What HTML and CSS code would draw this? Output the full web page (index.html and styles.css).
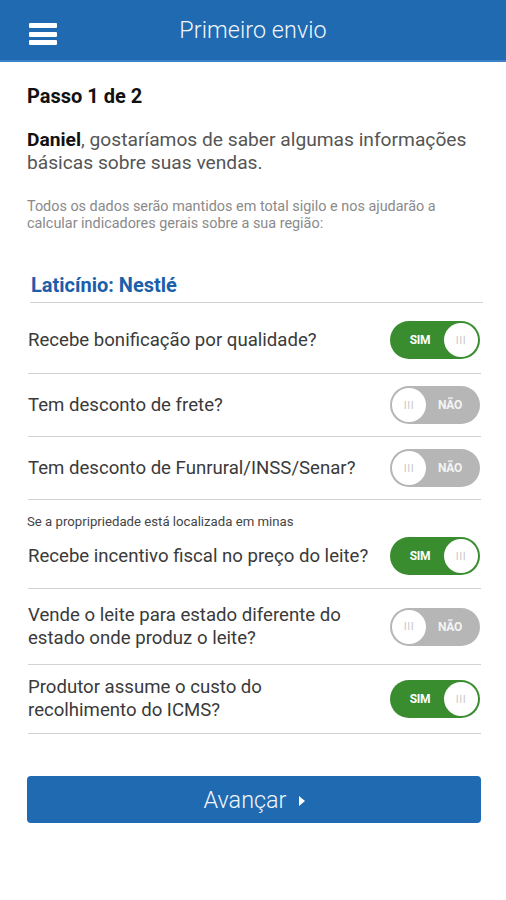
FILE: index.html
```html
<!DOCTYPE html>
<html lang="pt">
<head>
<meta charset="utf-8">
<title>Primeiro envio</title>
<link rel="stylesheet" href="styles.css">
</head>
<body>
<header class="topbar">
  <button class="menu" aria-label="Menu">
    <span></span><span></span><span></span>
  </button>
  <h1 class="title">Primeiro envio</h1>
</header>
<main class="content">
  <h2 class="step">Passo 1 de 2</h2>
  <p class="intro"><strong>Daniel</strong>, gostaríamos de saber algumas informações básicas sobre suas vendas.</p>
  <p class="note">Todos os dados serão mantidos em total sigilo e nos ajudarão a calcular indicadores gerais sobre a sua região:</p>
  <h3 class="dairy">Laticínio: Nestlé</h3>

  <div class="row row-first">
    <span class="question">Recebe bonificação por qualidade?</span>
    <span class="toggle on"><span class="label">SIM</span><span class="knob">III</span></span>
  </div>
  <div class="row row-short">
    <span class="question">Tem desconto de frete?</span>
    <span class="toggle off"><span class="knob">III</span><span class="label">NÃO</span></span>
  </div>
  <div class="row row-short">
    <span class="question">Tem desconto de Funrural/INSS/Senar?</span>
    <span class="toggle off"><span class="knob">III</span><span class="label">NÃO</span></span>
  </div>
  <p class="hint">Se a propripriedade está localizada em minas</p>
  <div class="row row-hinted">
    <span class="question">Recebe incentivo fiscal no preço do leite?</span>
    <span class="toggle on"><span class="label">SIM</span><span class="knob">III</span></span>
  </div>
  <div class="row row-tall">
    <span class="question narrow">Vende o leite para estado diferente do estado onde produz o leite?</span>
    <span class="toggle off"><span class="knob">III</span><span class="label">NÃO</span></span>
  </div>
  <div class="row row-last">
    <span class="question narrow">Produtor assume o custo do recolhimento do ICMS?</span>
    <span class="toggle on"><span class="label">SIM</span><span class="knob">III</span></span>
  </div>

  <button class="next">Avançar <span class="arrow"></span></button>
</main>
</body>
</html>
```
FILE: styles.css
```css
* { box-sizing: border-box; }
html, body { margin: 0; padding: 0; background: #fff; }
body {
  font-family: Roboto, "Liberation Sans", Arial, sans-serif;
  color: #333;
  width: 506px;
}
.topbar {
  height: 62px;
  background: #1f6ab1;
  border-bottom: 2px solid #3c82c6;
  display: flex;
  align-items: center;
  position: relative;
  justify-content: center;
}
.menu {
  position: absolute;
  left: 29px;
  top: 23px;
  width: 28px;
  height: 22px;
  padding: 0;
  border: 0;
  background: transparent;
  display: flex;
  flex-direction: column;
  justify-content: space-between;
}
.menu span {
  display: block;
  height: 5px;
  background: #fff;
  border-radius: 1px;
}
.title {
  margin: 0;
  font-size: 23.3px;
  font-weight: 300;
  color: #f2f6fb;
  letter-spacing: 0.1px;
}
.content { padding: 0 27px; }
.step {
  margin: 22px 0 0;
  font-size: 20px;
  line-height: 24px;
  font-weight: 700;
  color: #111;
}
.intro {
  margin: 20px 0 0;
  font-size: 19.2px;
  line-height: 23px;
  color: #555;
}
.intro strong { color: #111; font-weight: 700; }
.note {
  margin: 24px 0 0;
  font-size: 14.4px;
  line-height: 17px;
  color: #8a8a8a;
  max-width: 430px;
}
.dairy {
  margin: 41px -4px 0 3px;
  padding: 0 0 5px 1px;
  font-size: 20px;
  line-height: 24px;
  font-weight: 700;
  color: #1b5eaa;
  border-bottom: 1.5px solid #d2d2d2;
}
.row {
  display: flex;
  align-items: center;
  justify-content: space-between;
  gap: 12px;
  border-bottom: 1.5px solid #d2d2d2;
  margin-left: 1px;
  margin-right: -2px;
}
.row-first { height: 71px; padding-top: 4px; }
.row-short { height: 63px; }
.row-hinted { height: 59px; padding-bottom: 6px; }
.row-tall { height: 76px; }
.row-last { height: 69px; }
.question {
  font-size: 18.6px;
  line-height: 23px;
  color: #3a3a3a;
}
.question.narrow { max-width: 330px; }
.hint {
  margin: 14px 0 0;
  font-size: 13.2px;
  line-height: 16px;
  color: #444;
}
.toggle {
  flex: none;
  width: 90px;
  height: 38px;
  border-radius: 19px;
  display: flex;
  align-items: center;
  padding: 2px;
  margin-right: 1px;
  font-size: 12px;
  font-weight: 700;
  color: #fff;
}
.toggle.on { background: #3a8d2f; justify-content: space-between; }
.toggle.off { background: #b6b6b6; justify-content: space-between; }
.toggle .label { flex: 1; text-align: center; letter-spacing: -0.3px; }
.toggle.on .label { padding-left: 4px; }
.toggle.off .label { padding-right: 4px; color: #f4f4f4; }
.knob {
  width: 34px;
  height: 34px;
  border-radius: 50%;
  background: #fff;
  color: #c8c8c8;
  font-size: 10px;
  font-weight: 400;
  letter-spacing: 0.5px;
  display: flex;
  align-items: center;
  justify-content: center;
  font-family: "DejaVu Sans", sans-serif;
}
.next {
  display: flex;
  align-items: center;
  justify-content: center;
  gap: 12px;
  width: 454px;
  height: 47px;
  margin: 42px 0 0;
  border: 0;
  border-radius: 4px;
  background: #1f6ab1;
  color: #f2f6fb;
  font-family: Roboto, "Liberation Sans", Arial, sans-serif;
  font-size: 23.4px;
  font-weight: 300;
}
.arrow {
  width: 0;
  height: 0;
  border-top: 5px solid transparent;
  border-bottom: 5px solid transparent;
  border-left: 6px solid #fff;
  margin-top: 2px;
}
```
